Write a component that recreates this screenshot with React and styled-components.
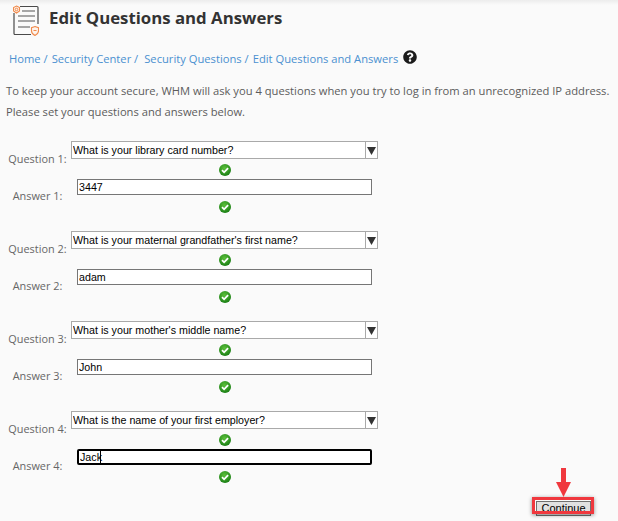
import React from "react";
import styled, { createGlobalStyle } from "styled-components";
import { FaQuestionCircle } from "react-icons/fa";

const Global = createGlobalStyle`
  html, body { margin: 0; padding: 0; background: #fafafa; }
  body { font-family: "Open Sans", sans-serif; overflow: hidden; }
  svg { display: block; }
`;

const Page = styled.div`
  position: relative;
  width: 618px;
  height: 521px;
  overflow: hidden;
  background: #fafafa;
  box-sizing: border-box;
  &::before {
    content: "";
    position: absolute;
    inset: 0 0 auto 0;
    height: 5px;
    background: linear-gradient(#ececec, #fafafa);
  }
`;

const Header = styled.header`
  display: flex;
  align-items: center;
  gap: 10px;
  padding: 4px 0 0 13px;
  height: 32px;
`;

const Title = styled.h1`
  margin: 0;
  font: 700 16.8px/24px "Open Sans", sans-serif;
  color: #333;
  position: relative;
  top: -2px;
`;

const Crumbs = styled.nav`
  display: flex;
  align-items: center;
  margin: 14px 0 0 9px;
  height: 16px;
  font-size: 11.2px;
  color: #4a90d0;
`;

const Crumb = styled.span`
  margin-right: ${(p) => p.$gap}px;
  white-space: nowrap;
`;

const Help = styled(FaQuestionCircle)`
  margin-left: 1px;
  width: 14px;
  height: 14px;
  color: #1b1b1b;
  position: relative;
  top: -1px;
`;

const Intro = styled.p`
  margin: ${(p) => p.$top}px 0 0 6px;
  font-size: 11.2px;
  line-height: 16px;
  color: #5c5c5c;
  white-space: nowrap;
`;

const Form = styled.form`
  margin-top: 21px;
  display: flex;
  flex-direction: column;
`;

const Row = styled.div`
  display: grid;
  grid-template-columns: 71px 307px;
  height: ${(p) => p.$h}px;
`;

const Label = styled.label`
  justify-self: center;
  align-self: start;
  margin-top: ${(p) => p.$top}px;
  padding-left: 4px;
  font-size: 10.9px;
  line-height: 16px;
  color: #666;
  white-space: nowrap;
`;

const Cell = styled.div`
  display: flex;
  flex-direction: column;
  align-items: center;
`;

const SelectWrap = styled.div`
  position: relative;
  width: 307px;
  height: 18px;
`;

const Select = styled.select`
  display: block;
  appearance: none;
  width: 100%;
  height: 100%;
  margin: 0;
  padding: 0 14px 0 1px;
  border: 1px solid #a9a9a9;
  border-radius: 0;
  background: #fff;
  font: 10.7px "Liberation Sans", Arial, sans-serif;
  color: #000;
`;

const Arrow = styled.span`
  position: absolute;
  top: 1px;
  right: 1px;
  bottom: 1px;
  width: 11px;
  border-left: 1px solid #a9a9a9;
  display: flex;
  align-items: center;
  justify-content: center;
`;

const InputWrap = styled.div`
  position: relative;
  width: 295px;
  height: 16px;
`;

const Input = styled.input`
  display: block;
  width: 100%;
  height: 100%;
  box-sizing: border-box;
  margin: 0;
  padding: 0 1px;
  outline: none;
  border: ${(p) => (p.$focused ? "2px solid #000" : "1px solid #767676")};
  border-radius: ${(p) => (p.$focused ? "2px" : "0")};
  background: #fff;
  font: 10.7px "Liberation Sans", Arial, sans-serif;
  color: #000;
`;

const Caret = styled.span`
  position: absolute;
  left: 23px;
  top: 2px;
  bottom: 2px;
  width: 1px;
  background: #000;
`;

const CheckWrap = styled.span`
  display: block;
  height: 12px;
  margin-top: ${(p) => p.$top}px;
`;

const ContinueArea = styled.div`
  position: absolute;
  left: 532px;
  top: 467px;
  width: 62px;
  height: 54px;
`;

const ArrowMark = styled.svg`
  position: absolute;
  left: 24px;
  top: 0;
`;

const Continue = styled.button`
  position: absolute;
  left: 4px;
  top: 34px;
  width: 55px;
  height: 15px;
  margin: 0;
  padding: 0;
  border: 1px solid #707070;
  background: #e1e1e1;
  font: 11px/13px "Liberation Sans", Arial, sans-serif;
  color: #000;
`;

const Highlight = styled.span`
  position: absolute;
  left: 0;
  top: 30px;
  width: 62px;
  height: 17px;
  box-sizing: border-box;
  border: 3px solid #f0383e;
  box-shadow: 0 1px 4px rgba(0, 0, 0, 0.45);
`;

function Logo() {
  return (
    <svg width="26" height="31" viewBox="0 0 26 31" fill="none">
      <path d="M7 1.500H24a1 1 0 0 1 1 1V19M18 29.500H2a1 1 0 0 1-1-1V8" stroke="#4a4a4a" strokeWidth="1.200" />
      <path d="M9 6H22M5 11H22M5 16H22M5 22H17" stroke="#8a8a8a" strokeWidth="1.600" />
      <path d="M3.500 1L6.500 2.500V6L3.500 8L.5 6V2.500Z" fill="#fdf3ec" stroke="#f08a4b" strokeWidth="1.100" />
      <circle cx="3.500" cy="4.500" r="1.300" stroke="#f08a4b" />
      <path d="M22 21.500L25.500 22.700V26C25.500 28 24 29.500 22 30.500C20 29.500 18.500 28 18.500 26V22.700Z" fill="#fdf3ec" stroke="#f08a4b" strokeWidth="1.100" />
      <path d="M20.500 25.500H23.500" stroke="#f08a4b" />
    </svg>
  );
}

function Check({ top }) {
  return (
    <CheckWrap $top={top}>
      <svg width="12" height="12" viewBox="0 0 12 12">
        <defs>
          <radialGradient id="g" cx="45%" cy="35%" r="70%">
            <stop offset="0%" stopColor="#5cc03a" />
            <stop offset="100%" stopColor="#157a12" />
          </radialGradient>
        </defs>
        <circle cx="6" cy="6" r="6" fill="url(#g)" />
        <path d="M3 6.200L5.100 8.300L9.100 4.100" fill="none" stroke="#fff" strokeWidth="1.800" />
      </svg>
    </CheckWrap>
  );
}

const items = [
  { q: "What is your library card number?", a: "3447" },
  { q: "What is your maternal grandfather's first name?", a: "adam" },
  { q: "What is your mother's middle name?", a: "John" },
  { q: "What is the name of your first employer?", a: "Jack", focused: true },
];

export default function App() {
  return (
    <Page>
      <Global />
      <Header>
        <Logo />
        <Title>Edit Questions and Answers</Title>
      </Header>
      <Crumbs>
        <Crumb $gap={4}>Home /</Crumb>
        <Crumb $gap={6}>Security Center /</Crumb>
        <Crumb $gap={4}>Security Questions /</Crumb>
        <Crumb $gap={4}>Edit Questions and Answers</Crumb>
        <Help />
      </Crumbs>
      <Intro $top={17}>
        To keep your account secure, WHM will ask you 4 questions when you try to log in from an unrecognized IP address.
      </Intro>
      <Intro $top={5}>Please set your questions and answers below.</Intro>
      <Form>
        {items.map((it, i) => (
          <React.Fragment key={it.a}>
            <Row $h={38}>
              <Label $top={10}>Question {i + 1}:</Label>
              <Cell>
                <SelectWrap>
                  <Select defaultValue={it.q}>
                    <option>{it.q}</option>
                  </Select>
                  <Arrow>
                    <svg width="9" height="9" viewBox="0 0 9 9">
                      <path d="M0 1H9L4.500 9Z" fill="#333" />
                    </svg>
                  </Arrow>
                </SelectWrap>
                <Check top={5} />
              </Cell>
            </Row>
            <Row $h={52}>
              <Label $top={9}>Answer {i + 1}:</Label>
              <Cell>
                <InputWrap>
                  <Input defaultValue={it.a} $focused={it.focused} readOnly />
                  {it.focused && <Caret />}
                </InputWrap>
                <Check top={6} />
              </Cell>
            </Row>
          </React.Fragment>
        ))}
      </Form>
      <ContinueArea>
        <Continue type="button">Continue</Continue>
        <Highlight />
        <ArrowMark width="15" height="31" viewBox="0 0 15 31">
          <path d="M7.500 1V17" stroke="#f0383e" strokeWidth="5" />
          <path d="M0 15H15L7.500 30Z" fill="#f0383e" />
        </ArrowMark>
      </ContinueArea>
    </Page>
  );
}
